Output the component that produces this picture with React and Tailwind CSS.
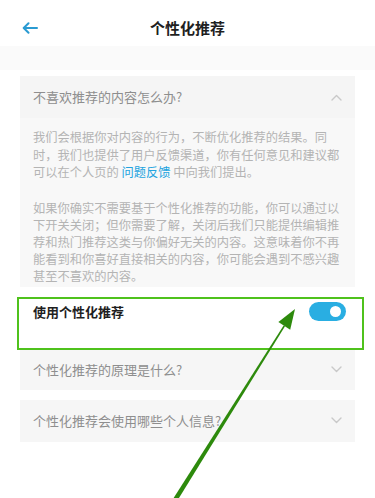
import React from "react";

function Chevron({ up }) {
  return (
    <svg width="11" height="7" viewBox="0 0 11 7" fill="none">
      <path
        d={up ? "M1 6 L5.5 1.5 L10 6" : "M1 1 L5.5 5.5 L10 1"}
        stroke="#c9c9c9"
        strokeWidth="1.4"
        strokeLinecap="round"
        strokeLinejoin="round"
      />
    </svg>
  );
}

export default function App() {
  const font = { fontFamily: '"Noto Sans CJK SC", "Noto Sans", sans-serif' };
  return (
    <div className="relative w-[375px] h-[498px] bg-white overflow-hidden" style={font}>
      {/* header */}
      <div className="relative h-[46px] flex items-center justify-center">
        <svg className="absolute left-[22px] top-[22px]" width="16" height="12" viewBox="0 0 16 12" fill="none">
          <path d="M15 6 H2 M6.5 1.2 L1.7 6 L6.5 10.8" stroke="#2a9bd2" strokeWidth="2" strokeLinecap="round" strokeLinejoin="round" />
        </svg>
        <span className="text-[15px] font-bold text-[#1f1f1f] mt-[10px]">个性化推荐</span>
      </div>
      <div className="h-[24px] bg-[#fafafa]" />
      <div className="h-[6px]" />

      <div className="px-[20px]">
        {/* card 1 */}
        <div className="bg-[#f8f8f8]">
          <div className="h-[42px] bg-[#f5f5f5] px-[13px] flex items-center justify-between">
            <span className="text-[13px] text-[#8e8e8e]">不喜欢推荐的内容怎么办?</span>
            <Chevron up />
          </div>
          <div className="px-[13px] pt-[11px] pb-[2px] text-[12.25px] leading-[17.5px] text-[#b4b4b4]">
            <p className="w-[307px]">
              我们会根据你对内容的行为，不断优化推荐的结果。同时，我们也提供了用户反馈渠道，你有任何意见和建议都可以在个人页的{" "}
              <span className="text-[#22a3df]">问题反馈</span> 中向我们提出。
            </p>
            <p className="w-[307px] mt-[18px] leading-[17.1px]">
              如果你确实不需要基于个性化推荐的功能，你可以通过以下开关关闭；但你需要了解，关闭后我们只能提供编辑推荐和热门推荐这类与你偏好无关的内容。这意味着你不再能看到和你喜好直接相关的内容，你可能会遇到不感兴趣甚至不喜欢的内容。
            </p>
          </div>
        </div>

        {/* toggle row */}
        <div className="h-[63px] pl-[13px] pr-[9px] pt-[16px] flex items-start justify-between">
          <span className="text-[13px] font-bold text-[#1f1f1f] leading-[18px]">使用个性化推荐</span>
          <div className="w-[37px] h-[19px] rounded-full bg-[#29aee2] flex items-center justify-end pr-[5px] -mt-[1px]">
            <div className="w-[11px] h-[11px] rounded-full bg-white" />
          </div>
        </div>

        {/* card 2 */}
        <div className="h-[40px] bg-[#f6f6f6] px-[13px] flex items-center justify-between">
          <span className="text-[13px] text-[#8e8e8e]">个性化推荐的原理是什么?</span>
          <Chevron />
        </div>
        <div className="h-[10px]" />
        {/* card 3 */}
        <div className="h-[42px] bg-[#f6f6f6] px-[13px] flex items-center justify-between">
          <span className="text-[13px] text-[#8e8e8e]">个性化推荐会使用哪些个人信息?</span>
          <Chevron />
        </div>
      </div>

      {/* green highlight box */}
      <div className="absolute left-[17px] top-[297px] w-[347px] h-[53px] border-2 border-[#4fc21c]" />

      {/* green arrow */}
      <svg className="absolute left-0 top-0" width="375" height="498" viewBox="0 0 375 498">
        <polygon points="177,501.2 173.1,498.8 283.6,325.5 285,326.3" fill="#2d8a0c" />
        <polygon points="295,309 278.4,322.1 290.2,329.7" fill="#2d8a0c" />
      </svg>
    </div>
  );
}
